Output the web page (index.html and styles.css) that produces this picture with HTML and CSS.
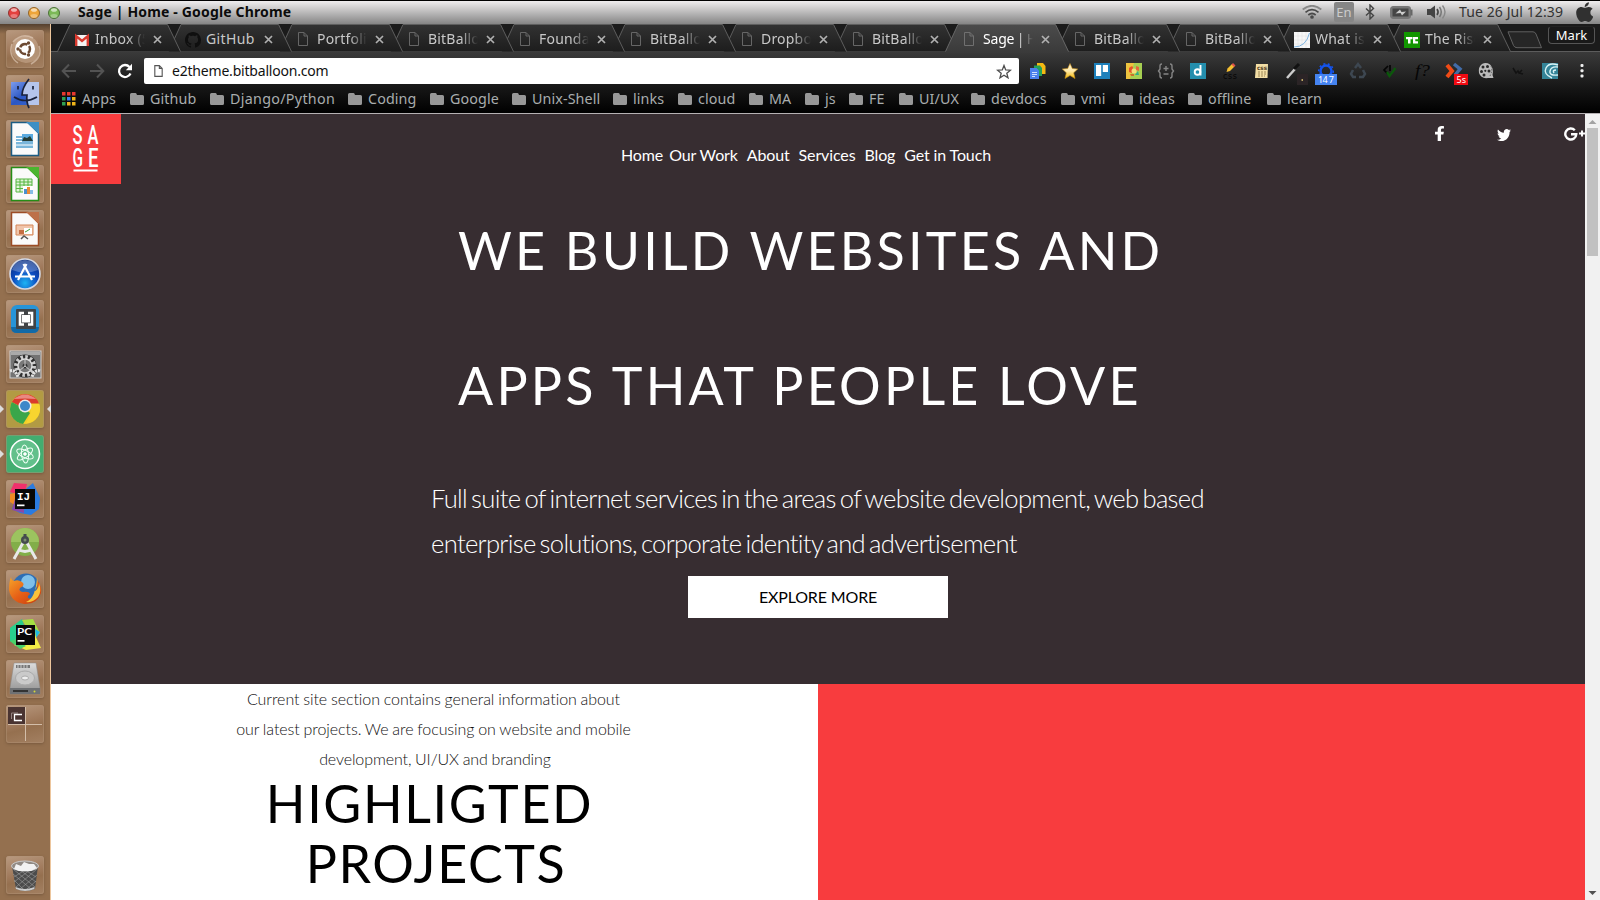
FILE: index.html
```html
<!DOCTYPE html>
<html lang="en">
<head>
<meta charset="utf-8">
<title>Sage | Home</title>
<link rel="stylesheet" href="styles.css">
</head>
<body>
<svg class="defs" width="0" height="0">
  <defs>
    <linearGradient id="tabFill" x1="0" y1="0" x2="0" y2="1"><stop offset="0" stop-color="#323232"/><stop offset="1" stop-color="#1d1d1d"/></linearGradient>
    <linearGradient id="tabOn" x1="0" y1="0" x2="0" y2="1"><stop offset="0" stop-color="#4b4b4b"/><stop offset="1" stop-color="#3a3a3a"/></linearGradient>
    <radialGradient id="blue" cx=".5" cy=".8" r=".8"><stop offset="0" stop-color="#1db4f4"/><stop offset=".5" stop-color="#0d4cc0"/><stop offset="1" stop-color="#082a7c"/></radialGradient>
    <linearGradient id="finder" x1="0" y1="0" x2="1" y2="1"><stop offset="0" stop-color="#7d9cec"/><stop offset=".5" stop-color="#2b57c4"/><stop offset="1" stop-color="#3b66cf"/></linearGradient>
    <linearGradient id="metal" x1="0" y1="0" x2="0" y2="1"><stop offset="0" stop-color="#dcdcdc"/><stop offset="1" stop-color="#909090"/></linearGradient>
    <linearGradient id="fox" x1="0" y1="0" x2="1" y2="1"><stop offset="0" stop-color="#f6a52a"/><stop offset=".5" stop-color="#e65f16"/><stop offset="1" stop-color="#c33c10"/></linearGradient>
    <linearGradient id="gold" x1="0" y1="0" x2="0" y2="1"><stop offset="0" stop-color="#fff3d8"/><stop offset=".5" stop-color="#ffe9a8"/><stop offset="1" stop-color="#f2b705"/></linearGradient>
  </defs>
  <symbol id="tab" viewBox="0 0 124 28"><path d="M.5 27.5 13 .5H110.500L123.500 27.500" fill="url(#tabFill)" stroke="#5e5e5e"/></symbol>
  <symbol id="tab-on" viewBox="0 0 124 29"><path d="M.5 27.500 13 .5H110.500L123.500 27.500V29H.5z" fill="url(#tabOn)"/><path d="M.5 27.500 13 .5H110.500L123.500 27.500" fill="none" stroke="#686868"/></symbol>
  <symbol id="page" viewBox="0 0 10 14"><path d="M.5.500H6L9.500 4V13.500H.5zM6 .5V4H9.500" fill="none" stroke="currentColor"/></symbol>
  <symbol id="close" viewBox="0 0 9 9"><path d="M1 1 8 8M8 1 1 8" stroke="currentColor" stroke-width="1.700"/></symbol>
  <symbol id="folder" viewBox="0 0 14 12"><path d="M0 1.500Q0 0 1.500 0H5.500Q6.500 0 7 2H12.500Q14 2 14 3.500V10.500Q14 12 12.500 12H1.500Q0 12 0 10.500z" fill="#989898"/></symbol>
</svg>

<header class="menubar">
  <svg class="lights" width="52" height="14" viewBox="0 0 52 14">
    <circle cx="6" cy="7" r="5.500" fill="#e3413f" stroke="#8e3330"/><circle cx="26" cy="7" r="5.500" fill="#eda53a" stroke="#936428"/><circle cx="46" cy="7" r="5.500" fill="#7cb957" stroke="#4c7038"/>
    <g fill="#fff" opacity=".6"><ellipse cx="6" cy="4" rx="3" ry="1.800"/><ellipse cx="26" cy="4" rx="3" ry="1.800"/><ellipse cx="46" cy="4" rx="3" ry="1.800"/></g>
    <g fill="#fff" opacity=".3"><ellipse cx="6" cy="10" rx="3.500" ry="2"/><ellipse cx="26" cy="10" rx="3.500" ry="2"/><ellipse cx="46" cy="10" rx="3.500" ry="2"/></g>
  </svg>
  <span class="wintitle">Sage | Home - Google Chrome</span>
  <div class="tray">
    <svg width="20" height="14" viewBox="0 0 20 14" fill="none" stroke="#4a4a4a" stroke-width="1.700"><path d="M.7 4.500Q10-3 19.300 4.500" stroke="#888"/><path d="M3.500 7.300Q10 2 16.500 7.300M6.300 10Q10 7 13.700 10"/><circle cx="10" cy="12" r="1" fill="#444"/></svg>
    <span class="lang">En</span>
    <svg class="bt" width="10" height="16" viewBox="0 0 10 16" fill="none" stroke="#444" stroke-width="1.400"><path d="M1 4.500 8.500 11.500 5 15V1L8.500 4.500 1 11.500"/></svg>
    <svg class="bat" width="23" height="13" viewBox="0 0 23 13"><rect x=".7" y=".7" width="19.600" height="11.600" rx="2.500" fill="#777" stroke="#777" stroke-width="1.400"/><rect x="2.500" y="2.500" width="16" height="8" fill="#454545"/><rect x="20.500" y="3.500" width="2" height="6" fill="#666"/><path d="M5.500 7.500 10 3.500 11.500 6 16 5.500 12 9.500 10.500 7z" fill="#ccc"/></svg>
    <svg class="snd" width="20" height="16" viewBox="0 0 20 16"><path d="M0 5H3.500L8 1.500V14.500L3.500 11H0z" fill="#444"/><path d="M10 5Q12.200 8 10 11" fill="none" stroke="#444" stroke-width="1.600"/><path d="M12.500 3Q16 8 12.500 13" fill="none" stroke="#777" stroke-width="1.500"/><path d="M15.500 1.500Q20.500 8 15.500 14.500" fill="none" stroke="#888" stroke-width="1.400"/></svg>
    <span class="clock">Tue 26 Jul 12:39</span>
    <svg class="apple" width="17" height="20" viewBox="0 28 376 454" preserveAspectRatio="none"><path fill="#303030" d="M318.7 268.7c-.2-36.7 16.4-64.4 50-84.8-18.8-26.9-47.2-41.7-84.7-44.6-35.5-2.8-74.3 20.7-88.5 20.7-15 0-49.4-19.7-76.4-19.7C63.3 141.2 4 184.8 4 273.5q0 39.3 14.4 81.2c12.8 36.7 59 126.7 107.2 125.2 25.2-.6 43-17.9 75.8-17.9 31.8 0 48.3 17.9 76.4 17.9 48.6-.7 90.4-82.500 102.6-119.300-65.200-30.700-61.700-90-61.700-91.900zm-56.600-164.200c27.300-32.400 24.800-61.900 24-72.500-24.100 1.400-52 16.400-67.900 34.900-17.500 19.800-27.800 44.300-25.600 71.900 26.100 2 49.900-11.400 69.500-34.300z"/></svg>
  </div>
</header>

<div class="desktop">
<aside class="launcher">
  <div class="tile"><svg viewBox="0 0 38 38"><path d="M6 24Q4 8 19 6Q32 6 33 20Q34 32 20 33Q10 32 6 24" fill="#e8cdb6" opacity=".35"/><path d="M7 12Q16 2 27 8M33 16Q37 27 25 34M12 33Q2 26 6 14" fill="none" stroke="#f2dfd0" opacity=".5" stroke-width="1.500"/><circle cx="19" cy="19" r="10" fill="#fff"/><circle cx="19" cy="19" r="5" fill="none" stroke="#6c4a33" stroke-width="2.500" stroke-dasharray="8.500 2" stroke-dashoffset="4"/><g fill="#6c4a33"><circle cx="12" cy="19" r="1.700"/><circle cx="22.500" cy="13" r="1.700"/><circle cx="22.500" cy="25" r="1.700"/></g></svg></div>
  <div class="tile"><svg viewBox="0 0 38 38"><rect x="5" y="7" width="28" height="23" fill="url(#finder)"/><path d="M21 7H33V30H21L20 20H16Q17 12 21 7" fill="#b5c5ec"/><path d="M23 4Q16 13 16 20H21Q20 27 23 33M8 22Q19 29 31 22M12 11V14.500M27 11V14.500" fill="none" stroke="#19213a" stroke-width="1.700"/></svg></div>
  <div class="tile"><svg viewBox="0 0 38 38"><path d="M5.500 2.500H22L32.500 13V35.500H5.500z" fill="#fafafa" stroke="#1c5c83" stroke-width="1.500"/><path d="M20 2H33V14z" fill="#3d8fc4"/><path d="M10 16H27V28H10z" fill="#79b5da"/><path d="M10 18.500H16M10 21.500H16M10 25H27" stroke="#fff"/><rect x="16" y="14" width="11" height="7" fill="#59a9df"/><path d="M16 21 18 17 21 18 24 16 27 21z" fill="#263c36"/></svg></div>
  <div class="tile"><svg viewBox="0 0 38 38"><path d="M5.500 2.500H22L32.500 13V35.500H5.500z" fill="#fafafa" stroke="#258d16" stroke-width="1.500"/><path d="M20 2H33V14z" fill="#4bb52f"/><path d="M10 14H26V27H10z" fill="#e0f4d8"/><path d="M10 14H26V27H10zM10 17H26M10 20H26M10 23.500H26M14 14V27M18 14V27M22 14V27" fill="none" stroke="#55b640"/><rect x="17" y="21" width="10" height="8" fill="#fff"/><path d="M18 29V24H21V29" fill="#4a91cf"/><path d="M21 29V22H24V29" fill="#ed8a35"/><path d="M24 29V25H27V29" fill="#86bde5"/></svg></div>
  <div class="tile"><svg viewBox="0 0 38 38"><path d="M5.500 2.500H22L32.500 13V35.500H5.500z" fill="#fafafa" stroke="#9c4c25" stroke-width="1.500"/><path d="M20 2H33V14z" fill="#bd7049"/><path d="M10 15H27V25H10z" fill="#f0c5ab" stroke="#d58658"/><rect x="13" y="20" width="5" height="4" fill="#c56f43"/><rect x="18" y="18" width="8" height="6" fill="#fff"/><path d="M19 22 21 21 24 19" stroke="#3e9c3a" fill="none"/><path d="M15 29 18 26 22 29" stroke="#555" stroke-width="1.500" fill="none"/></svg></div>
  <div class="tile"><svg viewBox="0 0 38 38"><circle cx="19" cy="19" r="15" fill="url(#blue)" stroke="#d5d9e4" stroke-width="1.600"/><path d="M6 15Q9 5 19 5T32 15Q19 20 6 15" fill="#fff" opacity=".25"/><path d="M20.500 9 12 25M17.500 9 26 25M9 21.500H29" stroke="#fff" stroke-width="2.200" fill="none"/></svg></div>
  <div class="tile"><svg viewBox="0 0 38 38"><rect x="5" y="5" width="28" height="28" rx="6" fill="#2794d8"/><path d="M5 27H33Q33 33 27 33H11Q5 33 5 27" fill="#126aa7"/><rect x="10" y="9" width="20" height="20" rx="1" fill="#404346"/><path d="M18 13H14V24.500H18M22 13H26V24.500H22" fill="none" stroke="#fff" stroke-width="2.600"/><rect x="16" y="15" width="8" height="7.500" fill="#fff"/></svg></div>
  <div class="tile"><svg viewBox="0 0 38 38"><rect x="4" y="6" width="31" height="27" fill="#737373" stroke="#d2d2d2"/><rect x="5" y="7" width="29" height="3" fill="#aaa"/><circle cx="19" cy="21" r="9" fill="none" stroke="#303030" stroke-width="5"/><circle cx="19" cy="21" r="9" fill="none" stroke="#ccc" stroke-width="4" stroke-dasharray="2.500 2.210"/><circle cx="19" cy="21" r="7" fill="#777" stroke="#ddd" stroke-width="1.500"/><circle cx="19" cy="21" r="2.500" fill="#333"/><path d="M19 21V14M19 21 13 26M19 21 25 26" stroke="#ccc"/><path d="M4 26Q9 24 12 32M34 26Q29 24 26 32" fill="none" stroke="#e4e4e4" stroke-width="3" stroke-dasharray="2 1"/></svg></div>
  <div class="tile chrome"><svg viewBox="0 0 38 38"><circle cx="19" cy="19" r="15" fill="#f3cf27"/><path d="M19 19 5.800 12A15 15 0 0 1 33 13.500H19z" fill="#da3b2d"/><path d="M19 19 5.800 12A15 15 0 0 0 17 34L24 23z" fill="#3aa64a"/><path d="M20 33.500 25 22 24 14H33.300A15 15 0 0 1 20 33.500" fill="#f8d52f"/><circle cx="19" cy="16" r="6.500" fill="#ececec"/><circle cx="19" cy="16" r="5" fill="#3c88c9"/><path d="M8 9Q19 0 30 9Q19 8 8 9" fill="#fff" opacity=".4"/></svg><i class="run"></i><i class="focus"></i></div>
  <div class="tile atom"><svg viewBox="0 0 38 38" fill="none" stroke="#fff"><circle cx="19" cy="19" r="14.500" fill="#62c08b" stroke-width="1.500"/><g stroke-width="1" stroke="#effff5"><ellipse cx="19" cy="19" rx="9" ry="3.500" transform="rotate(25 19 19)"/><ellipse cx="19" cy="19" rx="9" ry="3.500" transform="rotate(85 19 19)"/><ellipse cx="19" cy="19" rx="9" ry="3.500" transform="rotate(145 19 19)"/></g><circle cx="19" cy="19" r="1.300" fill="#fff"/></svg><i class="run"></i></div>
  <div class="tile"><svg viewBox="0 0 38 38"><path d="M8 3 21 4 18 16 4 12z" fill="#f0306c"/><path d="M4 14 13 12V28L4 22z" fill="#ee8b24"/><path d="M21 8 27 3 34 18 33 29 25 35 14 33 6 29 9 22z" fill="#2b7be0"/><path d="M6 30 10 15 18 10V33z" fill="#8a48a8"/><rect x="9" y="9" width="20" height="20" fill="#080808"/><text x="11" y="20" font-size="11" font-weight="700" font-family="Liberation Mono, monospace" fill="#fff">IJ</text><rect x="11" y="24.500" width="7.500" height="1.700" fill="#fff"/></svg></div>
  <div class="tile"><svg viewBox="0 0 38 38"><circle cx="19" cy="17" r="14" fill="#82ae49"/><path d="M5 17A14 14 0 0 1 33 17z" fill="#9cc35f"/><path d="M8 34 18 16H20L30 34M12 24Q19 29 26 24" fill="none" stroke="#e8e8e8" stroke-width="3"/><path d="M19 9V13" stroke="#454b4e" stroke-width="3"/><circle cx="19" cy="15" r="4" fill="#454b4e"/><circle cx="19" cy="15" r="1.500" fill="#7b8c70"/></svg></div>
  <div class="tile"><svg viewBox="0 0 38 38"><circle cx="20" cy="17" r="13.500" fill="#2c6db5"/><circle cx="22" cy="12" r="7" fill="#7fc0ea"/><path d="M5 7Q5 10 8 11Q12 9 16 12Q20 15 14 18Q12 21 17 22Q23 21 24 24Q19 28 25 29Q33 24 31 10Q36 16 35 23Q31 35 18 34Q5 32 3 20Q3 12 5 7" fill="url(#fox)"/><path d="M31 7Q33 15 28 22Q33 19 33 13Q36 21 32 27Q27 33 20 32Q30 28 31 7" fill="#f9c23a"/></svg></div>
  <div class="tile"><svg viewBox="0 0 38 38"><path d="M4 13 16 4 20 16 14 32 4 26z" fill="#28cf8d"/><path d="M16 5 27 4 34 18 28 24z" fill="#a5df42"/><path d="M29 14 34 17 30 23z" fill="#1fb9e5"/><path d="M29 20 35 33 20 35 8 30 16 24z" fill="#f3ee46"/><path d="M4 26 14 34 20 31 10 24z" fill="#48d36b"/><rect x="10" y="10" width="19" height="20" fill="#080808"/><text x="11" y="20" font-size="10" font-weight="700" font-family="Lato, sans-serif" textLength="15" lengthAdjust="spacingAndGlyphs" fill="#fff">PC</text><rect x="11.500" y="25" width="7" height="1.700" fill="#fff"/></svg></div>
  <div class="tile"><svg viewBox="0 0 38 38"><path d="M8 3H30L34 28V34H4V28z" fill="url(#metal)" stroke="#888" stroke-width=".5"/><path d="M4 28H34V34H4z" fill="#6e7174"/><ellipse cx="19" cy="18" rx="9.500" ry="7" fill="#cacaca" stroke="#aaa"/><ellipse cx="19" cy="18" rx="3.500" ry="2" fill="#eee" stroke="#aaa"/><path d="M10 5H24V8H10z" fill="#777"/><path d="M12 5V8M15 5V8M18 5V8M21 5V8" stroke="#ccc"/><path d="M7 31H22" stroke="#333" stroke-width="2"/><circle cx="28.500" cy="31.500" r="1" fill="#d6d839"/></svg></div>
  <div class="tile"><svg viewBox="0 0 38 38"><rect x="2" y="2" width="17" height="17" fill="#4a3431"/><path d="M2 19.500H36M19.500 2V36" stroke="#d3bea9" stroke-width="1"/><path d="M12 8H5.500V14" fill="none" stroke="#948380"/><path d="M16 9.500H8.500V15.500H16" fill="none" stroke="#fff" stroke-width="1.300"/></svg></div>
  <div class="tile trash"><svg viewBox="0 0 38 38"><path d="M6 10H32L29 33Q19 37 10 33z" fill="#4c4c4c"/><path d="M7 13 29 31M10 11 30 26M16 12 30 21M7 18 25 33M8 24 17 33M31 13 10 31M28 11 8 26M22 12 8 21M31 19 14 33M30 25 21 33" stroke="#9d9d9d" stroke-width=".6"/><ellipse cx="19" cy="10" rx="13.500" ry="5" fill="#918a84" stroke="#ccc"/><path d="M8 13 10 8 15 10 18 6 23 8 28 8 31 12 25 15H13z" fill="#f2f2f2"/><path d="M9.500 31Q19 35 28.500 31V33Q19 37 10 33z" fill="#ccc"/></svg></div>
</aside>

<main class="browser">
  <nav class="tabs">
    <div class="tab"><svg class="shape"><use href="#tab"/></svg><svg class="fav" viewBox="0 0 16 16"><path d="M1 3H15V14H1z" fill="#f3f3f3"/><path d="M2.200 14V4L8 9 13.800 4V14" fill="none" stroke="#d8392e" stroke-width="2.400"/></svg><span>Inbox (5</span><svg class="x"><use href="#close"/></svg></div>
    <div class="tab"><svg class="shape"><use href="#tab"/></svg><svg class="fav" viewBox="0 0 16 16"><path fill="#0f0f0f" d="M8 0C3.580 0 0 3.580 0 8c0 3.540 2.290 6.530 5.470 7.590.4.070.55-.17.55-.38 0-.19-.01-.82-.01-1.490-2.010.37-2.530-.49-2.690-.94-.09-.23-.48-.94-.82-1.130-.28-.15-.68-.52-.01-.53.63-.01 1.080.58 1.230.82.72 1.210 1.870.87 2.330.66.07-.52.28-.87.51-1.070-1.780-.2-3.640-.89-3.640-3.950 0-.87.31-1.590.82-2.150-.08-.2-.36-1.020.08-2.120 0 0 .67-.21 2.200.82.64-.18 1.320-.27 2-.27.68 0 1.360.09 2 .27 1.530-1.040 2.200-.82 2.200-.82.44 1.100.16 1.920.08 2.120.51.56.82 1.270.82 2.150 0 3.070-1.870 3.750-3.650 3.950.29.25.54.73.54 1.480 0 1.070-.01 1.930-.01 2.200 0 .21.15.46.55.38A8.013 8.013 0 0016 8c0-4.420-3.580-8-8-8z"/></svg><span>GitHub</span><svg class="x"><use href="#close"/></svg></div>
    <div class="tab"><svg class="shape"><use href="#tab"/></svg><svg class="fav pg"><use href="#page"/></svg><span>Portfolio</span><svg class="x"><use href="#close"/></svg></div>
    <div class="tab"><svg class="shape"><use href="#tab"/></svg><svg class="fav pg"><use href="#page"/></svg><span>BitBalloon</span><svg class="x"><use href="#close"/></svg></div>
    <div class="tab"><svg class="shape"><use href="#tab"/></svg><svg class="fav pg"><use href="#page"/></svg><span>Foundation</span><svg class="x"><use href="#close"/></svg></div>
    <div class="tab"><svg class="shape"><use href="#tab"/></svg><svg class="fav pg"><use href="#page"/></svg><span>BitBalloon</span><svg class="x"><use href="#close"/></svg></div>
    <div class="tab"><svg class="shape"><use href="#tab"/></svg><svg class="fav pg"><use href="#page"/></svg><span>Dropbox</span><svg class="x"><use href="#close"/></svg></div>
    <div class="tab"><svg class="shape"><use href="#tab"/></svg><svg class="fav pg"><use href="#page"/></svg><span>BitBalloon</span><svg class="x"><use href="#close"/></svg></div>
    <div class="tab on"><svg class="shape"><use href="#tab-on"/></svg><svg class="fav pg"><use href="#page"/></svg><span>Sage | Home</span><svg class="x"><use href="#close"/></svg></div>
    <div class="tab"><svg class="shape"><use href="#tab"/></svg><svg class="fav pg"><use href="#page"/></svg><span>BitBalloon</span><svg class="x"><use href="#close"/></svg></div>
    <div class="tab"><svg class="shape"><use href="#tab"/></svg><svg class="fav pg"><use href="#page"/></svg><span>BitBalloon</span><svg class="x"><use href="#close"/></svg></div>
    <div class="tab"><svg class="shape"><use href="#tab"/></svg><svg class="fav" viewBox="0 0 16 16"><path d="M0 0H16V16H0z" fill="#f7f7f7"/><path d="M4 0V16M8 0V16M12 0V16M0 4H16M0 8H16M0 12H16" stroke="#dedede" stroke-width=".5"/><path d="M0 15Q12 15 15.500 1" fill="none" stroke="#7db4e2"/></svg><span>What is</span><svg class="x"><use href="#close"/></svg></div>
    <div class="tab"><svg class="shape"><use href="#tab"/></svg><svg class="fav" viewBox="0 0 16 16"><path d="M0 0H16V16H0z" fill="#129600"/><path d="M2 5H8.500V7.300H6.500V11.500H4V7.300H2zM9 5H14V7.300H11.300V9.200H14V11.500H9z" fill="#fff"/></svg><span>The Rise</span><svg class="x"><use href="#close"/></svg></div>
    <svg class="newtab" width="36" height="18" viewBox="0 0 36 18"><path d="M1 .8H26Q28 .8 29 3L34.500 16.700H10Q7.500 16.700 6.500 14.500z" fill="#262626" stroke="#606060"/></svg>
    <span class="user">Mark</span>
  </nav>

  <div class="toolbar">
    <svg class="nav-i" width="16" height="16" viewBox="0 0 16 16" fill="none" stroke="#535353" stroke-width="2"><path d="M15 8H2M8 1.500 1.700 8 8 14.500"/></svg>
    <svg class="nav-i" width="16" height="16" viewBox="0 0 16 16" fill="none" stroke="#535353" stroke-width="2"><path d="M1 8H14M8 1.500 14.300 8 8 14.500"/></svg>
    <svg class="nav-i reload" width="16" height="16" viewBox="0 0 16 16"><path d="M13.500 10.500A6 6 0 1 1 12.500 4" fill="none" stroke="#fff" stroke-width="2.300"/><path d="M15 .8V7.200H8.800z" fill="#fff"/></svg>
    <div class="omnibox"><svg class="pgi" width="9" height="12" viewBox="0 0 10 14"><path d="M.7.700H6L9.300 4V13.300H.7zM6 .7V4H9.300" fill="none" stroke="#555" stroke-width="1.300"/></svg><span>e2theme.bitballoon.com</span><svg class="star" width="16" height="15" viewBox="0 0 16 15"><path d="M8 1.500 9.700 5.900 14.500 6.200 10.800 9.200 12 13.800 8 11.200 4 13.800 5.200 9.200 1.500 6.200 6.300 5.900z" fill="none" stroke="#4d4d4d" stroke-width="1.300"/></svg></div>
    <div class="exts">
      <svg viewBox="0 0 16 16"><path d="M7 0H13L15.500 3V11H7z" fill="#f3b912"/><path d="M4 2.500H10L12 5V13H4z" fill="#22a05a"/><path d="M0 5H6.500L9 7.500V16H0z" fill="#4a80ed"/><path d="M2 9.500H7M2 11.500H7M2 13.500H5" stroke="#cfe0ff"/></svg>
      <svg viewBox="0 0 16 16"><path d="M8 .5 10.300 5.500 15.700 6 11.700 9.800 13 15.500 8 12.500 3 15.500 4.300 9.800.3 6 5.700 5.500z" fill="url(#gold)" stroke="#c99018" stroke-width=".6"/></svg>
      <svg viewBox="0 0 16 16"><path d="M0 0H16V16H0z" fill="#1d80bb"/><path d="M2 2H7.200V13H2zM8.800 2H14V9H8.800z" fill="#fff"/></svg>
      <svg viewBox="0 0 16 16"><path d="M0 0H16V16H0z" fill="#edc33f"/><path d="M8 0H16V16H4z" fill="#a6cf52"/><path d="M3 5Q6 2 7 4L6 10 3 9z" fill="#e4532b"/><path d="M10 3 13 4 13 8 10 7z" fill="#e4673b"/><path d="M12 8 13 12 9 12z" fill="#35a985"/><path d="M4 11 8 11 8 13 5 13z" fill="#c9702c"/><circle cx="8" cy="8" r="2.500" fill="#f5dc7a"/></svg>
      <svg viewBox="0 0 16 16" fill="none" stroke="#858585" stroke-width="1.400"><path d="M4 1Q2 1 2 3V6L.5 8 2 10V13Q2 15 4 15M12 1Q14 1 14 3V6L15.500 8 14 10V13Q14 15 12 15M8 3V8M5.500 5.500H10.500M5.500 11H10.500"/></svg>
      <svg viewBox="0 0 16 16"><path d="M0 0H16V16H0z" fill="#248ead"/><circle cx="7.500" cy="9" r="2.800" fill="none" stroke="#fff" stroke-width="1.900"/><path d="M10.500 2V12.500" stroke="#fff" stroke-width="1.900"/></svg>
      <svg viewBox="0 0 16 16"><path d="M4.500 9 5.500 5.500 10 1 12.500 3.500 8 8z" fill="#f4be31"/><path d="M9.500 1.500 11 0 13.500 2.500 12 4z" fill="#e0524b"/><text x="1" y="16" font-size="8" font-family="DejaVu Sans, sans-serif" textLength="14" fill="#050505">css</text></svg>
      <svg viewBox="0 0 16 16"><path d="M2 1H14L13.500 15H1z" fill="#f3dfa6"/><text x="3" y="7" font-size="6" font-weight="700" font-family="DejaVu Sans, sans-serif" textLength="10" lengthAdjust="spacingAndGlyphs" fill="#55401e">css</text><path d="M4 9H12M4 11H12M4 13H11" stroke="#9c8756" stroke-dasharray="2 1"/></svg>
      <svg viewBox="0 0 16 16"><path d="M1 15 9 6" stroke="#ccc" stroke-width="2.500"/><path d="M8 6 13 1" stroke="#111" stroke-width="3"/><rect x="11" y="11" width="11" height="11" fill="#2b2426"/><path d="M15.500 17H17" stroke="#eed37b" stroke-width="1.500"/></svg>
      <svg viewBox="0 0 16 16"><circle cx="8" cy="8" r="5.500" fill="none" stroke="#1454ee" stroke-width="2.500"/><circle cx="8" cy="8" r="7.300" fill="none" stroke="#1454ee" stroke-width="1.500" stroke-dasharray="2 2.500"/><rect x="-3" y="11" width="22" height="11" fill="#4584f2"/><text x="0" y="20" font-size="9" font-family="Noto Sans, sans-serif" textLength="16" fill="#fff">14 7</text></svg>
      <svg viewBox="0 0 16 16" fill="none" stroke="#3d4751" stroke-width="2.500"><path d="M5 5 8 1 11 5M3 7 1 11 3 14H6M13 7 15 11 13 14H9"/></svg>
      <svg viewBox="0 0 16 16" fill="none"><path d="M6 3 2 7 6 11M8 2V8" stroke="#050505" stroke-width="1.700"/><path d="M5 9 7.500 13 13.500 5" stroke="#0b570b" stroke-width="2.400"/></svg>
      <svg viewBox="0 0 16 16"><text x="1" y="13" font-size="17" font-style="italic" font-family="Liberation Serif, serif" textLength="15" lengthAdjust="spacingAndGlyphs" fill="#050505">f?</text></svg>
      <svg viewBox="0 0 16 16" fill="none"><path d="M8 1 14 6 9 12" stroke="#416ca8" stroke-width="3.500"/><path d="M1 2 6 8 1 14" stroke="#f04b16" stroke-width="4"/><rect x="8" y="11" width="14" height="11" fill="#f00a12"/><text x="10.500" y="19.700" font-size="9" font-family="Noto Sans, sans-serif" fill="#fff">5s</text></svg>
      <svg viewBox="0 0 16 16"><path d="M4 1Q8-1 12 1.500Q16 5 14.500 12L15.500 15 10 15Q3 16 1 10Q0 4 4 1" fill="#bcbcbc"/><g fill="#292929"><circle cx="5" cy="4" r="1.500"/><circle cx="9.500" cy="3.500" r="1.500"/><circle cx="3.500" cy="8.500" r="1.500"/><circle cx="11" cy="8" r="1.500"/><circle cx="6" cy="12" r="1.500"/><circle cx="7.300" cy="7.800" r="1.100"/></g><path d="M13 3Q15 7 12 13" stroke="#555" stroke-dasharray="1.500 1.500" fill="none"/></svg>
      <svg viewBox="0 0 16 16" fill="none" stroke="#121212" stroke-width="1.500"><path d="M3 5 6 10 8 8 9 10 12 7M9 10 13 11"/></svg>
      <svg viewBox="0 0 16 16" fill="none"><path d="M0 0H16V16H0z" fill="#348498"/><path d="M16 2Q7-1 4 5T10 15M16 4Q9 3 8 8T16 12M14 7Q10 7 12 10" stroke="#d9f3f5" stroke-width="1.400"/></svg>
    </div>
    <svg class="dots" width="4" height="14" viewBox="0 0 4 14" fill="#eee"><rect x=".5" y="0" width="3" height="3" rx="1"/><rect x=".5" y="5.300" width="3" height="3" rx="1"/><rect x=".5" y="10.600" width="3" height="3" rx="1"/></svg>
  </div>

  <div class="bookmarks">
    <a style="width:68px"><svg width="14" height="14" viewBox="0 0 14 14"><path d="M0 0H3.500V3.500H0zM5 0H8.500V3.500H5zM10 0H13.500V3.500H10z" fill="#e8382f"/><path d="M0 5H3.500V8.500H0zM0 10H3.500V13.500H0z" fill="#2fa052"/><path d="M5 5H8.500V8.500H5z" fill="#3a84f0"/><path d="M10 5H13.500V8.500H10zM5 10H8.500V13.500H5zM10 10H13.500V13.500H10z" fill="#efb419"/></svg>Apps</a>
    <a style="width:80px"><svg width="14" height="12"><use href="#folder"/></svg>Github</a>
    <a style="width:138px"><svg width="14" height="12"><use href="#folder"/></svg>Django/Python</a>
    <a style="width:82px"><svg width="14" height="12"><use href="#folder"/></svg>Coding</a>
    <a style="width:82px"><svg width="14" height="12"><use href="#folder"/></svg>Google</a>
    <a style="width:101px"><svg width="14" height="12"><use href="#folder"/></svg>Unix-Shell</a>
    <a style="width:65px"><svg width="14" height="12"><use href="#folder"/></svg>links</a>
    <a style="width:71px"><svg width="14" height="12"><use href="#folder"/></svg>cloud</a>
    <a style="width:56px"><svg width="14" height="12"><use href="#folder"/></svg>MA</a>
    <a style="width:44px"><svg width="14" height="12"><use href="#folder"/></svg>js</a>
    <a style="width:50px"><svg width="14" height="12"><use href="#folder"/></svg>FE</a>
    <a style="width:72px"><svg width="14" height="12"><use href="#folder"/></svg>UI/UX</a>
    <a style="width:90px"><svg width="14" height="12"><use href="#folder"/></svg>devdocs</a>
    <a style="width:58px"><svg width="14" height="12"><use href="#folder"/></svg>vmi</a>
    <a style="width:69px"><svg width="14" height="12"><use href="#folder"/></svg>ideas</a>
    <a style="width:79px"><svg width="14" height="12"><use href="#folder"/></svg>offline</a>
    <a style="width:70px"><svg width="14" height="12"><use href="#folder"/></svg>learn</a>
  </div>

  <div class="viewport">
    <div class="site">
      <section class="hero">
        <div class="top">
          <svg class="logo" width="70" height="70" viewBox="0 0 70 70"><rect width="70" height="70" fill="#f83c3e"/><g fill="#fff" font-family="Roboto, sans-serif" font-weight="500" font-size="25"><text x="21.500" y="30" textLength="10" lengthAdjust="spacingAndGlyphs">S</text><text x="36.500" y="30" textLength="11" lengthAdjust="spacingAndGlyphs">A</text><text x="21.500" y="53" textLength="10.500" lengthAdjust="spacingAndGlyphs">G</text><text x="37" y="53" textLength="10.500" lengthAdjust="spacingAndGlyphs">E</text></g><rect x="22.500" y="55.500" width="24" height="2" fill="#fff"/></svg>
          <nav class="menu"><a>Home</a><a>Our Work</a><a>About</a><a>Services</a><a>Blog</a><a>Get in Touch</a></nav>
          <div class="social">
            <svg class="fb" width="9" height="15" viewBox="22 0 276 512" preserveAspectRatio="none"><path fill="#fff" d="M279.140 288l14.220-92.660h-88.910v-60.130c0-25.350 12.420-50.060 52.240-50.060h40.420V6.260S260.430 0 225.360 0c-73.220 0-121.080 44.380-121.080 124.720v70.620H22.890V288h81.390v224h100.170V288z"/></svg>
            <svg class="tw" width="14" height="12" viewBox="0 48 512 416" preserveAspectRatio="none"><path fill="#fff" d="M459.370 151.716c.325 4.548.325 9.097.325 13.645 0 138.720-105.583 298.558-298.558 298.558-59.452 0-114.680-17.219-161.137-47.106 8.447.974 16.568 1.299 25.340 1.299 49.055 0 94.213-16.568 130.274-44.832-46.132-.975-84.792-31.188-98.112-72.772 6.498.974 12.995 1.624 19.818 1.624 9.421 0 18.843-1.300 27.614-3.573-48.081-9.747-84.143-51.980-84.143-102.985v-1.299c13.969 7.797 30.214 12.670 47.431 13.319-28.264-18.843-46.781-51.005-46.781-87.391 0-19.492 5.197-37.360 14.294-52.954 51.655 63.675 129.300 105.258 216.365 109.807-1.624-7.797-2.599-15.918-2.599-24.040 0-57.828 46.782-104.934 104.934-104.934 30.213 0 57.502 12.670 76.670 33.137 23.715-4.548 46.456-13.320 66.599-25.340-7.798 24.366-24.366 44.833-46.132 57.827 21.117-2.273 41.584-8.122 60.426-16.243-14.292 20.791-32.161 39.308-52.628 54.253z"/></svg>
            <svg class="gp" width="21" height="14" viewBox="0 0 21 14" fill="none" stroke="#fff"><path d="M10.800 3.200A5.500 5.500 0 1 0 12.300 7.200H7" stroke-width="2.400"/><path d="M15 6.500H21M18 3.500V9.500" stroke-width="1.900"/></svg>
          </div>
        </div>
        <h1>WE BUILD WEBSITES AND<br>APPS THAT PEOPLE LOVE</h1>
        <p class="lead">Full suite of internet services in the areas of website development, web based<br>enterprise solutions, corporate identity and advertisement</p>
        <a class="cta">EXPLORE MORE</a>
      </section>
      <section class="split">
        <div class="intro">
          <p>Current site section contains general information about<br>our latest projects. We are focusing on website and mobile<br><span class="p-last">development, UI/UX and branding</span></p>
          <h2><span class="h-first">HIGHLIGTED</span><br><span class="h-second">PROJECTS</span></h2>
        </div>
        <div class="panel"></div>
      </section>
    </div>
    <div class="scroll"><svg width="15" height="14" viewBox="0 0 15 14"><path d="M3.500 10 7.500 6 11.500 10z" fill="#a3a3a3"/></svg><div class="thumb"></div><svg width="15" height="14" viewBox="0 0 15 14"><path d="M3.500 5 7.500 9 11.500 5z" fill="#505050"/></svg></div>
  </div>
</main>
</div>
</body>
</html>
```
FILE: styles.css
```css
* { box-sizing: border-box; }
body { margin: 0; width: 1600px; height: 900px; overflow: hidden; display: flex; flex-direction: column; font-family: "Noto Sans", sans-serif; font-size: 14px; }
svg { display: block; flex: none; }
.defs { position: absolute; }
h1, h2, p { margin: 0; font-weight: 400; }

.menubar { height: 24px; flex: none; display: flex; align-items: center; padding: 0 7px 1px 8px; border-top: 1px solid #000; background: linear-gradient(#efedee, #858585); }
.lights { margin-top: 1px; }
.wintitle { margin: -1px 0 0 18px; font-weight: 700; font-size: 14px; letter-spacing: .16px; white-space: nowrap; color: #0c0c0c; }
.tray { margin-left: auto; display: flex; align-items: center; color: #333; }
.lang { width: 20px; height: 20px; margin-left: 12px; border-radius: 2px; background: #868686; color: #ccc; display: flex; align-items: center; justify-content: center; font-size: 13px; }
.bt { margin-left: 11px; }
.bat { margin-left: 15px; }
.snd { margin-left: 14px; }
.clock { width: 104px; margin: -2px 0 0 12px; font-size: 14px; letter-spacing: .1px; white-space: nowrap; }
.apple { margin-left: 13px; }

.desktop { flex: 1; min-height: 0; display: flex; }
.launcher { width: 51px; flex: none; padding: 6px 6px; display: flex; flex-direction: column; gap: 7px; background: linear-gradient(#54402f, #94704f 10px, #94704f); border-right: 1px solid #edc69d; }
.tile { position: relative; width: 38px; height: 38px; flex: none; border-radius: 3px; background: linear-gradient(165deg, #b99a80, #a07a5c 45%, #95704f 60%, #a38062); box-shadow: inset 0 0 0 1px #b0917577, 0 1px 3px #5f452f88; }
.tile svg { width: 38px; height: 38px; }
.tile.chrome { background: #b29b43; }
.tile.atom { background: #43ad70; }
.trash { margin-top: auto; }
.run, .focus { position: absolute; top: 15px; border: 4px solid transparent; }
.run { left: -6px; border-left-color: #ddd; border-right: 0; }
.focus { right: -7px; border-right-color: #ddd; border-left: 0; }

.browser { flex: 1; min-width: 0; display: flex; flex-direction: column; }
.tabs { height: 28px; flex: none; display: flex; padding-left: 6px; background: #1b1b1b; border-bottom: 1px solid #5c5c5c; }
.tab { position: relative; width: 124px; height: 28px; margin-right: -13px; flex: none; display: flex; align-items: center; padding-left: 17px; color: #c8c8c8; }
.shape { position: absolute; left: 0; top: 0; width: 124px; height: 28px; }
.tab.on .shape { height: 29px; }
.tab:nth-child(1) { z-index: 13; } .tab:nth-child(2) { z-index: 12; } .tab:nth-child(3) { z-index: 11; } .tab:nth-child(4) { z-index: 10; }
.tab:nth-child(5) { z-index: 9; } .tab:nth-child(6) { z-index: 8; } .tab:nth-child(7) { z-index: 7; } .tab:nth-child(8) { z-index: 6; }
.tab:nth-child(9) { z-index: 20; } .tab:nth-child(10) { z-index: 5; } .tab:nth-child(11) { z-index: 4; margin-right: -14px; } .tab:nth-child(12) { z-index: 3; margin-right: -14px; } .tab:nth-child(13) { z-index: 2; }
.fav { position: relative; width: 16px; height: 16px; margin-top: 3px; }
.pg { width: 10px; height: 14px; margin: 2px 4px 0 2px; color: #666; }
.tab span { position: relative; width: 50px; margin: 1px 0 0 5px; overflow: hidden; white-space: nowrap; line-height: 20px; letter-spacing: .2px; -webkit-mask-image: linear-gradient(90deg, #000 65%, transparent); mask-image: linear-gradient(90deg, #000 65%, transparent); }
.tab:nth-child(2) span { -webkit-mask-image: none; mask-image: none; letter-spacing: .35px; }
.tab.on span { letter-spacing: -.2px; word-spacing: -1px; }
.x { position: relative; width: 9px; height: 9px; margin: 2px 0 0 8px; color: #b0b0b0; }
.on { color: #fff; }
.on .pg { color: #707070; }
.newtab { margin: 7px 0 0 9px; }
.user { width: 47px; height: 18px; margin: 2px 0 0 5px; border: 1px solid #555; border-top-color: #222; border-radius: 4px; color: #fff; font-size: 13px; line-height: 16px; text-align: center; background: #191919; }

.toolbar { height: 36px; flex: none; display: flex; align-items: center; padding: 2px 0 0 10px; background: linear-gradient(#3a3a3a, #161616); }
.nav-i { margin-right: 12px; }
.reload { margin-right: 11px; }
.omnibox { width: 875px; height: 26px; flex: none; display: flex; align-items: center; padding: 0 7px 0 10px; border-radius: 2px; background: #fff; color: #111; }
.omnibox span { margin: -2px 0 0 9px; letter-spacing: -.2px; }
.star { margin-left: auto; }
.exts { display: flex; gap: 16px; margin-left: 11px; }
.exts svg { width: 16px; height: 16px; overflow: visible; }
.dots { margin-left: 22px; }

.bookmarks { height: 26px; flex: none; display: flex; padding-left: 11px; background: linear-gradient(#161616, #000); border-bottom: 1px solid #b5b1b3; color: #a9adae; font-size: 14.300px; letter-spacing: .1px; }
.bookmarks a { flex: none; display: flex; align-items: center; gap: 6px; height: 20px; white-space: nowrap; }
.bookmarks svg { margin-top: 2px; }
.bookmarks a:nth-child(3) { letter-spacing: .3px; }

.viewport { flex: 1; min-height: 0; display: flex; font-family: Lato, sans-serif; }
.site { width: 1534px; display: flex; flex-direction: column; overflow: hidden; background: #fff; }
.hero { height: 570px; flex: none; background: #372d31; color: #fff; }
.top { display: flex; height: 90px; }
.menu { display: flex; gap: 9px; margin: 29px 0 0 500px; font-size: 16px; line-height: 24px; letter-spacing: -.13px; white-space: nowrap; }
.menu a:first-child { margin-right: -3px; }
.social { display: flex; margin-left: auto; padding-top: 12px; }
.tw { margin: 3px 0 0 53px; }
.gp { margin: 1px 0 0 53px; }
.hero h1 { margin: -21px 0 0 407px; font-size: 52px; line-height: 135px; letter-spacing: 3.220px; white-space: nowrap; }
.lead { margin: 23px 0 0 380px; font-size: 25.600px; font-weight: 300; line-height: 45px; letter-spacing: -.69px; word-spacing: -2.200px; white-space: nowrap; }
.cta { display: block; width: 260px; height: 42px; margin: 10px 0 0 637px; background: #fff; color: #000; font-size: 16px; line-height: 42px; text-align: center; letter-spacing: -.15px; }
.split { flex: 1; display: flex; }
.intro { width: 767px; text-align: center; color: #222; }
.intro p { font-size: 16px; font-weight: 300; line-height: 30px; letter-spacing: -.06px; word-spacing: -.5px; white-space: nowrap; margin: 0 2px 0 0; color: #111; }
.p-last { padding-left: 3px; letter-spacing: -.1px; }
.intro h2 { margin-top: -1px; font-size: 52px; line-height: 60px; letter-spacing: 1.600px; color: #000; }
.h-first { padding-right: 10px; }
.h-second { padding-left: 3px; }
.panel { flex: 1; background: #f83c3e; }
.scroll { width: 15px; flex: none; display: flex; flex-direction: column; background: #f1f1f1; }
.thumb { width: 11px; height: 128px; margin: 0 2px auto; background: #c1c1c1; }
```
